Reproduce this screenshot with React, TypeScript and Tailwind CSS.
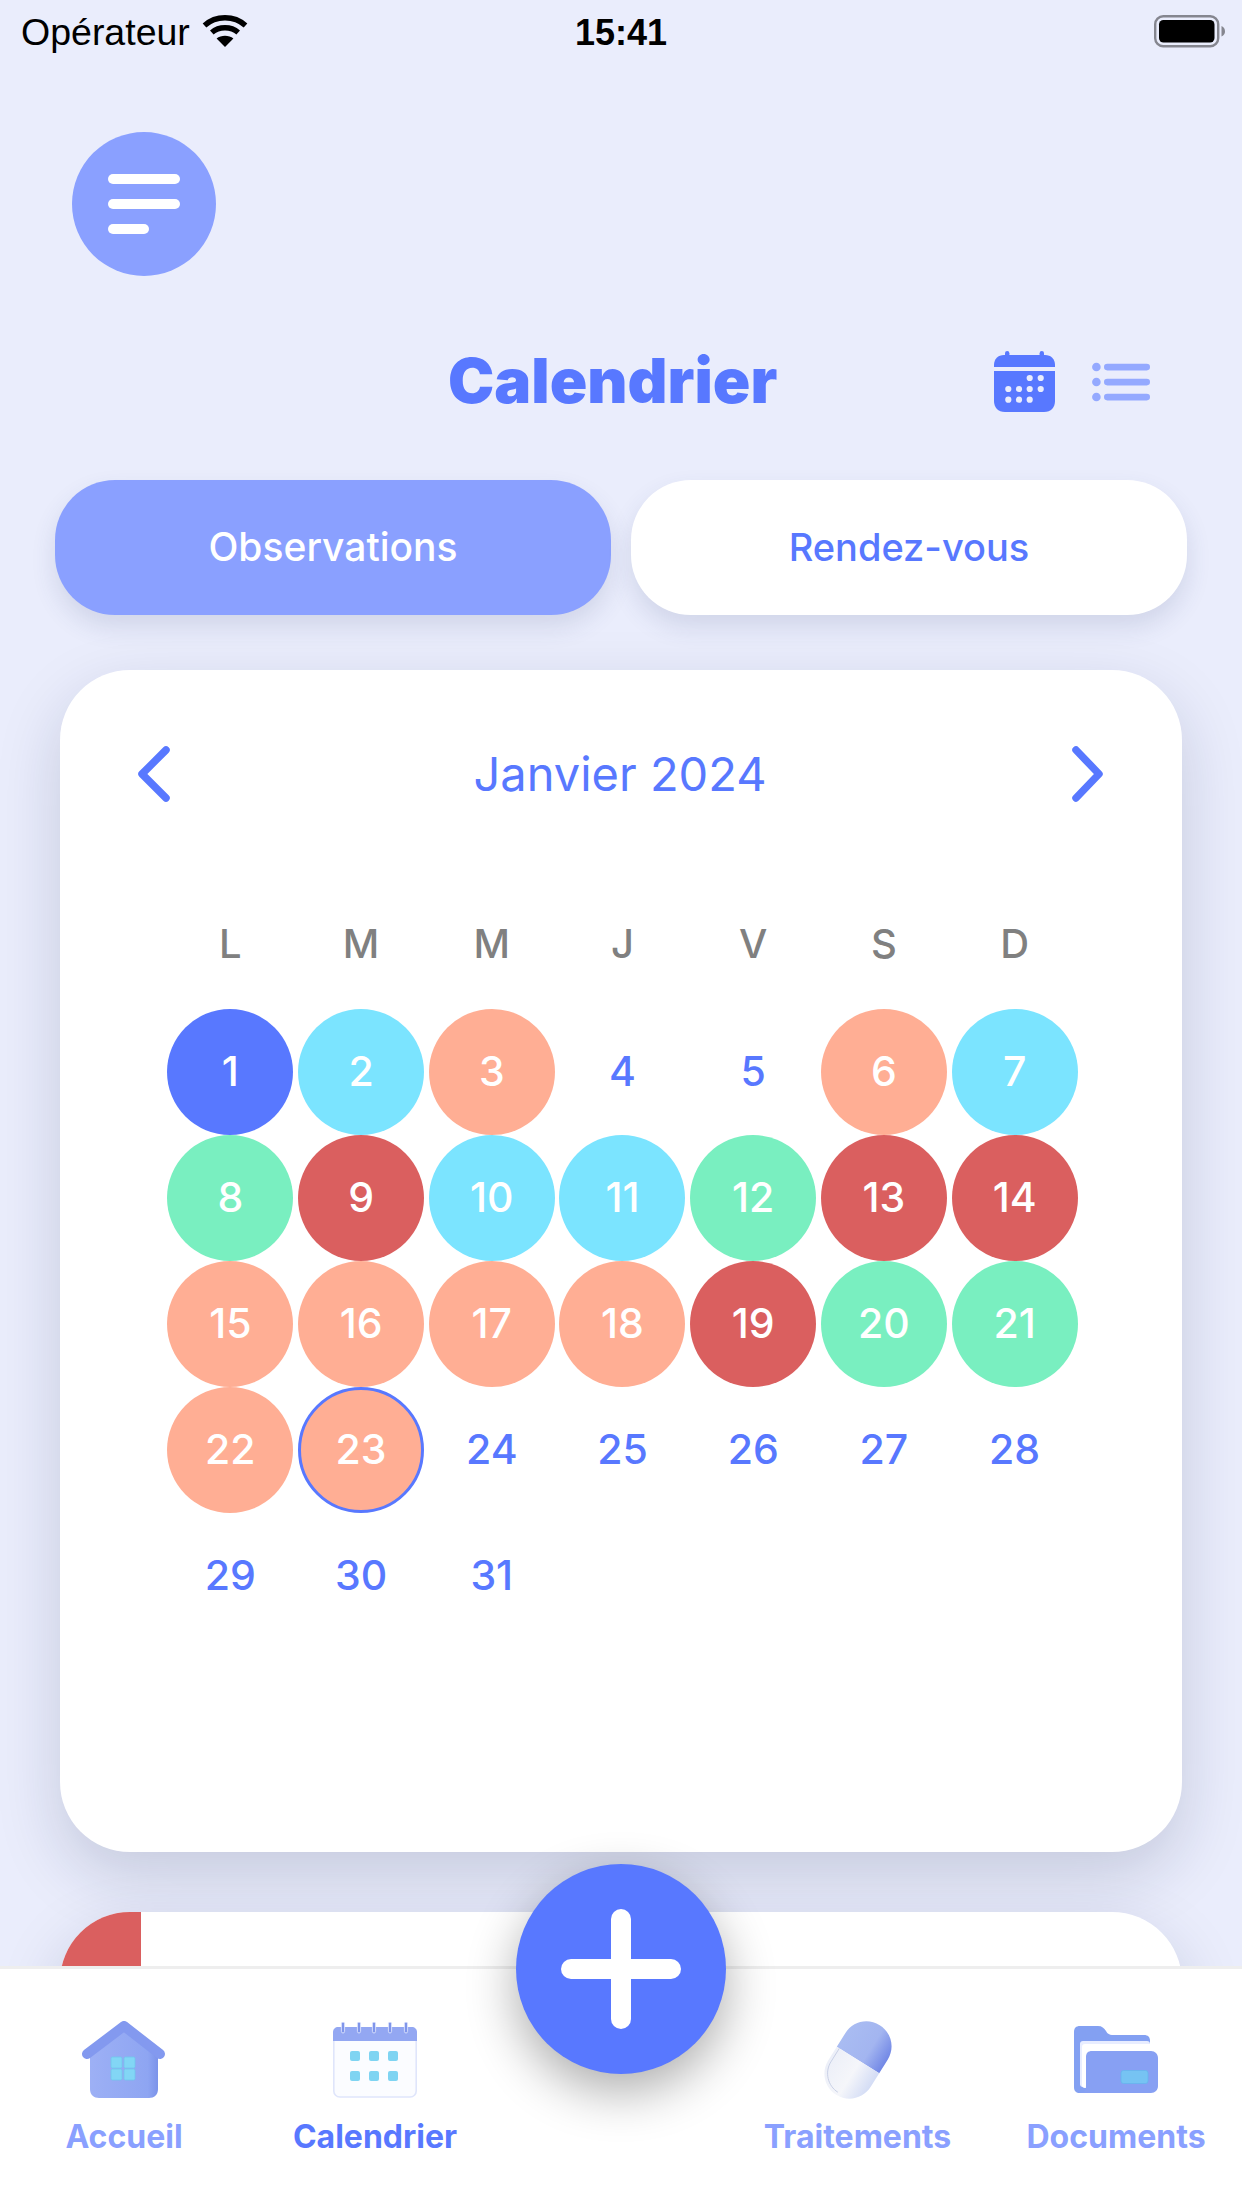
const BLUE = 'bg-[#5878ff] text-white';
const CYAN = 'bg-[#7be4ff] text-white';
const PEACH = 'bg-[#ffae94] text-white';
const GREEN = 'bg-[#79efc0] text-white';
const RED = 'bg-[#da5f5f] text-white';
const NONE = 'text-[#5878ff]';

const weekDays = ['L', 'M', 'M', 'J', 'V', 'S', 'D'];

const dayStyles: string[] = [
  BLUE, CYAN, PEACH, NONE, NONE, PEACH, CYAN,
  GREEN, RED, CYAN, CYAN, GREEN, RED, RED,
  PEACH, PEACH, PEACH, PEACH, RED, GREEN, GREEN,
  PEACH, PEACH, NONE, NONE, NONE, NONE, NONE,
  NONE, NONE, NONE,
];

function WifiIcon() {
  return (
    <svg width="46" height="34" viewBox="0 0 46 34" fill="none" className="ml-[12px] -mt-[2px]">
      <path d="M2.5 11.5C13.8 1.2 32.2 1.2 43.5 11.5" stroke="#000" strokeWidth="5.4" />
      <path d="M9.8 18.6C17 12.2 29 12.2 36.2 18.6" stroke="#000" strokeWidth="5.4" />
      <path d="M23 33 L14.6 24.6 C19 20.8 27 20.8 31.4 24.6 Z" fill="#000" />
    </svg>
  );
}

function BatteryIcon() {
  return (
    <svg width="72" height="34" viewBox="0 0 72 34" fill="none">
      <rect x="1.2" y="1.2" width="63" height="30" rx="8" stroke="#85868f" strokeWidth="2.4" />
      <rect x="5" y="5" width="55.5" height="22.5" rx="4.5" fill="#000" />
      <path d="M67.5 11 C70 12 71 14 71 16.3 C71 18.6 70 20.5 67.5 21.5 Z" fill="#85868f" />
    </svg>
  );
}

function CalendarSmallIcon() {
  const dots = [
    [35.7, 27], [46.7, 27],
    [14.3, 38], [25, 38], [35.7, 38], [46.7, 38],
    [14.3, 48.7], [25, 48.7], [35.7, 48.7],
  ];
  return (
    <svg width="61" height="61" viewBox="0 0 61 61">
      <rect x="11" y="0" width="4.4" height="9" rx="2.2" fill="#5878ff" />
      <rect x="45.6" y="0" width="4.4" height="9" rx="2.2" fill="#5878ff" />
      <path d="M0 16V14C0 8 4 4 10 4H51C57 4 61 8 61 14V16Z" fill="#5878ff" />
      <path d="M0 20H61V50C61 56.5 57 61 50 61H11C4 61 0 56.5 0 50Z" fill="#5878ff" />
      {dots.map(([cx, cy], i) => (
        <circle key={i} cx={cx} cy={cy} r="3.1" fill="#eaedfc" />
      ))}
    </svg>
  );
}

function ListIcon() {
  return (
    <svg width="58" height="40" viewBox="0 0 58 40" fill="#94a9ff">
      <circle cx="4.4" cy="5" r="4.3" />
      <circle cx="4.4" cy="20" r="4.3" />
      <circle cx="4.4" cy="35" r="4.3" />
      <rect x="12" y="1.8" width="46" height="6.6" rx="3.3" />
      <rect x="12" y="16.8" width="46" height="6.6" rx="3.3" />
      <rect x="12" y="31.8" width="46" height="6.6" rx="3.3" />
    </svg>
  );
}

function HouseIcon() {
  return (
    <svg width="84" height="78" viewBox="0 0 84 78">
      <defs>
        <linearGradient id="houseBody" x1="0" y1="0" x2="1" y2="0">
          <stop offset="0" stopColor="#9db0f5" />
          <stop offset="0.85" stopColor="#8ea5f2" />
          <stop offset="1" stopColor="#7b93ea" />
        </linearGradient>
      </defs>
      <path d="M8 30L42 6L76 30V68C76 74 72 77 67 77H17C12 77 8 74 8 68Z" fill="url(#houseBody)" />
      <path d="M5 33L42 5L78 33" fill="none" stroke="#8399ef" strokeWidth="10" strokeLinecap="round" strokeLinejoin="round" />
      <g fill="#82d6f5" stroke="#6fc6ec" strokeWidth="0.8">
        <rect x="29" y="36" width="11" height="11" rx="1.5" />
        <rect x="42" y="36" width="11" height="11" rx="1.5" />
        <rect x="29" y="48" width="11" height="11" rx="1.5" />
        <rect x="42" y="48" width="11" height="11" rx="1.5" />
      </g>
    </svg>
  );
}

function CalendarTabIcon() {
  const rings = [10, 26, 41, 57, 73];
  const cols = [17, 36, 55];
  const rows = [29, 49];
  return (
    <svg width="84" height="76" viewBox="0 0 84 76">
      <rect x="0.8" y="6" width="82.4" height="69" rx="6" fill="#fbfcff" stroke="#dfe5fb" strokeWidth="1.6" />
      <path d="M0 19V10C0 7 2.5 5 5 5H79C81.5 5 84 7 84 10V19Z" fill="#93a7f2" />
      {rings.map(x => (
        <rect key={x} x={x - 1.6} y="0" width="3.2" height="11" rx="1.6" fill="#7f95ea" stroke="#e6ebff" strokeWidth="0.8" />
      ))}
      {rows.map(y =>
        cols.map(x => <rect key={`${x}-${y}`} x={x} y={y} width="10" height="10" rx="2" fill="#7fd4f2" />)
      )}
    </svg>
  );
}

function PillIcon() {
  return (
    <svg width="68" height="80" viewBox="0 0 68 80">
      <defs>
        <linearGradient id="pillTop" x1="0" y1="0" x2="1" y2="0">
          <stop offset="0" stopColor="#a9bcf2" />
          <stop offset="0.6" stopColor="#a3b5f0" />
          <stop offset="1" stopColor="#7288e6" />
        </linearGradient>
        <linearGradient id="pillBottom" x1="0" y1="0" x2="1" y2="0">
          <stop offset="0" stopColor="#eceff8" />
          <stop offset="0.55" stopColor="#f5f6fa" />
          <stop offset="1" stopColor="#d3dcf5" />
        </linearGradient>
      </defs>
      <g transform="rotate(32 34 40)">
        <path d="M9 40V24C9 10 20 -1 34 -1C48 -1 59 10 59 24V40Z" fill="url(#pillTop)" />
        <path d="M9 40V56C9 70 20 81 34 81C48 81 59 70 59 56V40Z" fill="url(#pillBottom)" />
        <path d="M12 40V56C12 68 22 78 34 78" fill="none" stroke="#c3cbe3" strokeWidth="0.8" />
      </g>
    </svg>
  );
}

function FolderIcon() {
  return (
    <svg width="84" height="68" viewBox="0 0 84 68">
      <path d="M0 6C0 2 2 0 6 0H24C28 0 30 2 32 5C33 7 35 9 38 9H70C74 9 76 11 76 15V60H12V67H6C2 67 0 65 0 61Z" fill="#83a0f2" />
      <rect x="6" y="15" width="70" height="46" rx="3" fill="#e8edff" />
      <rect x="8" y="18" width="71" height="44" rx="3" fill="#ffffff" />
      <path d="M12 31C12 27 14 25 18 25H77C81 25 84 28 84 32V60C84 64 81 67 77 67H5C9 67 12 65 12 60Z" fill="#87a0f3" />
      <rect x="47" y="44.5" width="27" height="13" rx="2.5" fill="#76c3f3" stroke="#66b5ee" strokeWidth="0.8" />
    </svg>
  );
}

function TabItem({ label, active, icon, className }: { label: string; active?: boolean; icon: React.ReactNode; className: string }) {
  return (
    <div className={`flex flex-col items-center ${className}`}>
      <div className="h-[78px] flex items-center justify-center">{icon}</div>
      <span className={`mt-[20px] text-[32px] leading-[36px] font-bold whitespace-nowrap ${active ? 'text-[#5878ff]' : 'text-[#8aa0ff]'}`}>
        {label}
      </span>
    </div>
  );
}

export default function App() {
  return (
    <div className="relative w-[1242px] h-[2208px] overflow-hidden bg-[#eaedfc] flex flex-col font-['Inter',sans-serif]">
      <div className="flex-1 min-h-0 overflow-hidden">
        {/* status bar */}
        <div className="relative h-[64px] flex items-center pl-[21px] pr-[16px] text-black font-['Liberation_Sans',sans-serif]">
          <span className="text-[37.5px]">Opérateur</span>
          <WifiIcon />
          <span className="absolute left-[575px] top-[6px] text-[36px] font-bold">15:41</span>
          <div className="ml-auto"><BatteryIcon /></div>
        </div>

        <div className="pl-[72px] pt-[68px]">
          <div className="w-[144px] h-[144px] rounded-full bg-[#8aa0ff] flex flex-col items-start justify-center gap-[15px] pl-[36px]">
            <div className="w-[72px] h-[10px] rounded-full bg-white" />
            <div className="w-[72px] h-[10px] rounded-full bg-white" />
            <div className="w-[41px] h-[10px] rounded-full bg-white" />
          </div>
        </div>

        <div className="mt-[54px] h-[100px] flex items-center pl-[448px]">
          <h1 className="text-[62px] leading-none font-black text-[#5878ff] pt-[2px]">Calendrier</h1>
          <div className="ml-[217px] flex items-center gap-[37px] pt-[3px]">
            <CalendarSmallIcon />
            <ListIcon />
          </div>
        </div>

        <div className="mt-[50px] px-[55px] flex gap-[20px]">
          <div className="flex-1 h-[135px] rounded-[60px] bg-[#8aa0ff] text-white text-[39px] font-medium flex items-center justify-center shadow-[0_12px_24px_rgba(60,70,120,0.14)]">
            Observations
          </div>
          <div className="flex-1 h-[135px] rounded-[60px] bg-white text-[#5878ff] text-[38px] font-medium flex items-center justify-center shadow-[0_12px_24px_rgba(60,70,120,0.14)]">
            Rendez-vous
          </div>
        </div>

        {/* calendar card */}
        <div className="mt-[55px] mx-[60px] h-[1182px] rounded-[70px] bg-white shadow-[0_24px_64px_rgba(20,30,70,0.17)] pt-[74px]">
          <div className="h-[60px] pl-[77px] pr-[79px] flex items-center justify-between">
            <svg width="36" height="58" viewBox="0 0 36 58" fill="none">
              <path d="M29 5L5 29L29 53" stroke="#5878ff" strokeWidth="7.5" strokeLinecap="round" strokeLinejoin="round" />
            </svg>
            <span className="text-[47px] text-[#5878ff]">Janvier 2024</span>
            <svg width="36" height="58" viewBox="0 0 36 58" fill="none">
              <path d="M9 5L32 29L9 53" stroke="#5878ff" strokeWidth="7.5" strokeLinecap="round" strokeLinejoin="round" />
            </svg>
          </div>

          <div className="mt-[110px] ml-[105px] w-[915px] grid grid-cols-7">
            {weekDays.map((d, i) => (
              <div key={i} className="h-[60px] flex items-center justify-center text-[40px] font-medium text-[#808080]">
                {d}
              </div>
            ))}
          </div>

          <div className="mt-[35px] ml-[105px] w-[915px] grid grid-cols-7">
            {dayStyles.map((style, i) => (
              <div key={i} className="h-[126px] flex items-center justify-center">
                <div className={`w-[126px] h-[126px] rounded-full flex items-center justify-center text-[41px] font-medium ${style} ${i === 22 ? 'border-[3px] border-[#5878ff]' : ''}`}>
                  {i + 1}
                </div>
              </div>
            ))}
          </div>
        </div>

        {/* next card, cut by the tab bar */}
        <div className="mt-[60px] mx-[60px] h-[200px] rounded-t-[70px] bg-white overflow-hidden shadow-[0_24px_64px_rgba(20,30,70,0.17)]">
          <div className="w-[81px] h-full bg-[#da5f5f]" />
        </div>
      </div>

      {/* tab bar */}
      <div className="relative h-[242px] shrink-0 bg-white border-t-[3px] border-[#eeeeee] flex pt-[52px]">
        <TabItem label="Accueil" icon={<HouseIcon />} className="w-[112px] ml-[68px]" />
        <TabItem label="Calendrier" active icon={<CalendarTabIcon />} className="w-[166px] ml-[112px]" />
        <TabItem label="Traitements" icon={<PillIcon />} className="w-[189px] ml-[305px]" />
        <TabItem label="Documents" icon={<FolderIcon />} className="w-[176px] ml-[76px]" />
        <div className="absolute left-[516px] top-[-105px] w-[210px] h-[210px] rounded-full bg-[#5878ff] flex items-center justify-center shadow-[0_18px_50px_rgba(0,0,0,0.32)]">
          <svg width="120" height="120" viewBox="0 0 120 120">
            <rect x="0" y="50" width="120" height="20" rx="10" fill="#fff" />
            <rect x="50" y="0" width="20" height="120" rx="10" fill="#fff" />
          </svg>
        </div>
      </div>
    </div>
  );
}
